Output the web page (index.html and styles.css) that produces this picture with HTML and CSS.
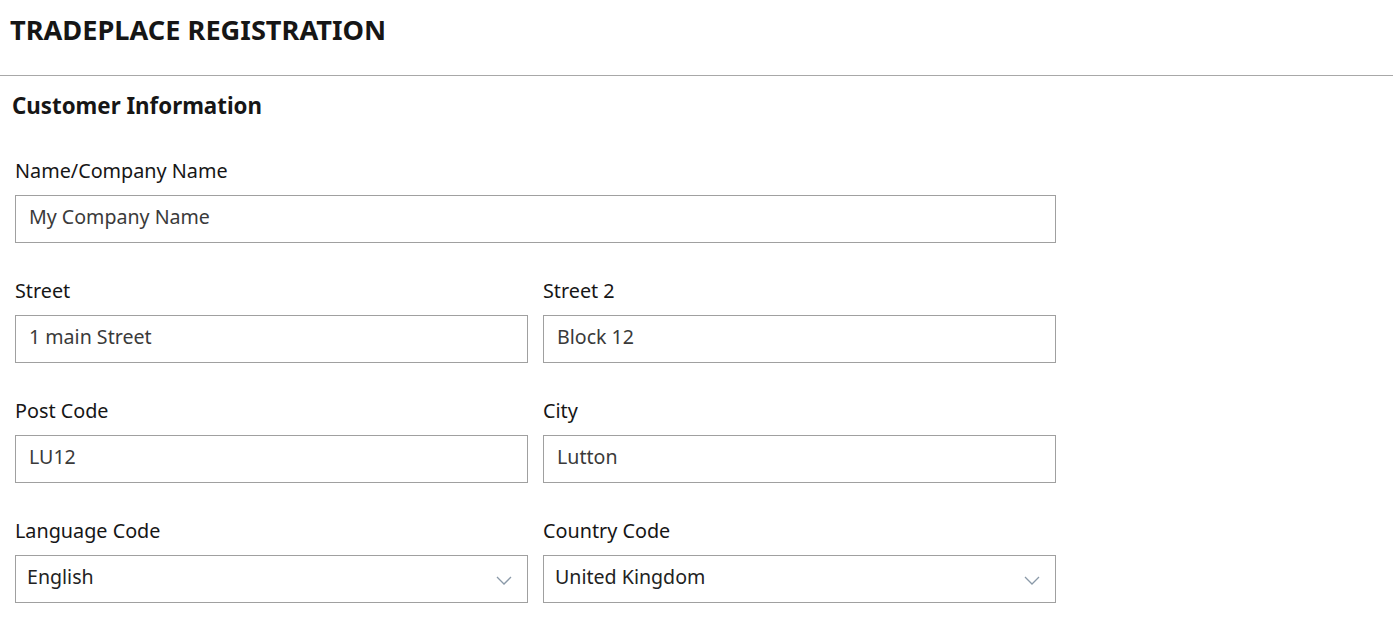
FILE: index.html
```html
<!DOCTYPE html>
<html lang="en">
<head>
    <meta charset="UTF-8">
    <meta name="viewport" content="width=device-width, initial-scale=1.0">
    <title>Tradeplace Registration</title>
    <link rel="stylesheet" href="styles.css">
</head>
<body>
    <header class="top-bar">
        <h1>TRADEPLACE REGISTRATION</h1>
    </header>

    <section class="form-section">
        <h2>Customer Information</h2>

        <div class="form-grid">
            <div class="field full">
                <label for="company">Name/Company Name</label>
                <input type="text" id="company" value="My Company Name">
            </div>

            <div class="field">
                <label for="street">Street</label>
                <input type="text" id="street" value="1 main Street">
            </div>
            <div class="field">
                <label for="street2">Street 2</label>
                <input type="text" id="street2" value="Block 12">
            </div>

            <div class="field">
                <label for="postcode">Post Code</label>
                <input type="text" id="postcode" value="LU12">
            </div>
            <div class="field">
                <label for="city">City</label>
                <input type="text" id="city" value="Lutton">
            </div>

            <div class="field">
                <label for="language">Language Code</label>
                <div class="select-wrap">
                    <select id="language">
                        <option>English</option>
                    </select>
                    <svg class="chevron" width="16" height="9" viewBox="0 0 16 9"><path d="M1 1l7 7 7-7" fill="none" stroke="#8a99a8" stroke-width="1.3"/></svg>
                </div>
            </div>
            <div class="field">
                <label for="country">Country Code</label>
                <div class="select-wrap">
                    <select id="country">
                        <option>United Kingdom</option>
                    </select>
                    <svg class="chevron" width="16" height="9" viewBox="0 0 16 9"><path d="M1 1l7 7 7-7" fill="none" stroke="#8a99a8" stroke-width="1.3"/></svg>
                </div>
            </div>
        </div>
    </section>
</body>
</html>
```

FILE: styles.css
```css
body {
    margin: 0;
    font-family: "Noto Sans", Arial, sans-serif;
    color: #161616;
    background: #fff;
}
.top-bar {
    height: 75px;
    border-bottom: 1px solid #a8a8a8;
    padding-left: 10px;
    display: flex;
    align-items: center;
}
.top-bar h1 {
    margin: 0 0 16px 0;
    font-size: 27.2px;
    font-weight: 700;
}
.form-section {
    padding: 16px 15px 0 15px;
    width: 1041px;
}
.form-section h2 {
    margin: 0 0 0 -3px;
    font-size: 22.3px;
    font-weight: 700;
    line-height: 28px;
}
.form-grid {
    display: grid;
    grid-template-columns: 1fr 1fr;
    column-gap: 15px;
    row-gap: 36px;
    margin-top: 39px;
}
.field {
    display: flex;
    flex-direction: column;
}
.field.full {
    grid-column: 1 / 3;
}
label {
    font-size: 19.8px;
    line-height: 24px;
    margin: 0 0 12px 0;
}
input, select {
    box-sizing: border-box;
    width: 100%;
    height: 48px;
    border: 1px solid #a0a0a0;
    border-radius: 0;
    font-family: inherit;
    font-size: 19.6px;
    color: #3a3a3a;
    padding: 0 13px 5px 13px;
    background: #fff;
    outline: none;
}
select {
    appearance: none;
    -webkit-appearance: none;
    padding-left: 11px;
    color: #222;
}
.select-wrap {
    position: relative;
}
.chevron {
    position: absolute;
    right: 16px;
    top: 21px;
    pointer-events: none;
}
```
